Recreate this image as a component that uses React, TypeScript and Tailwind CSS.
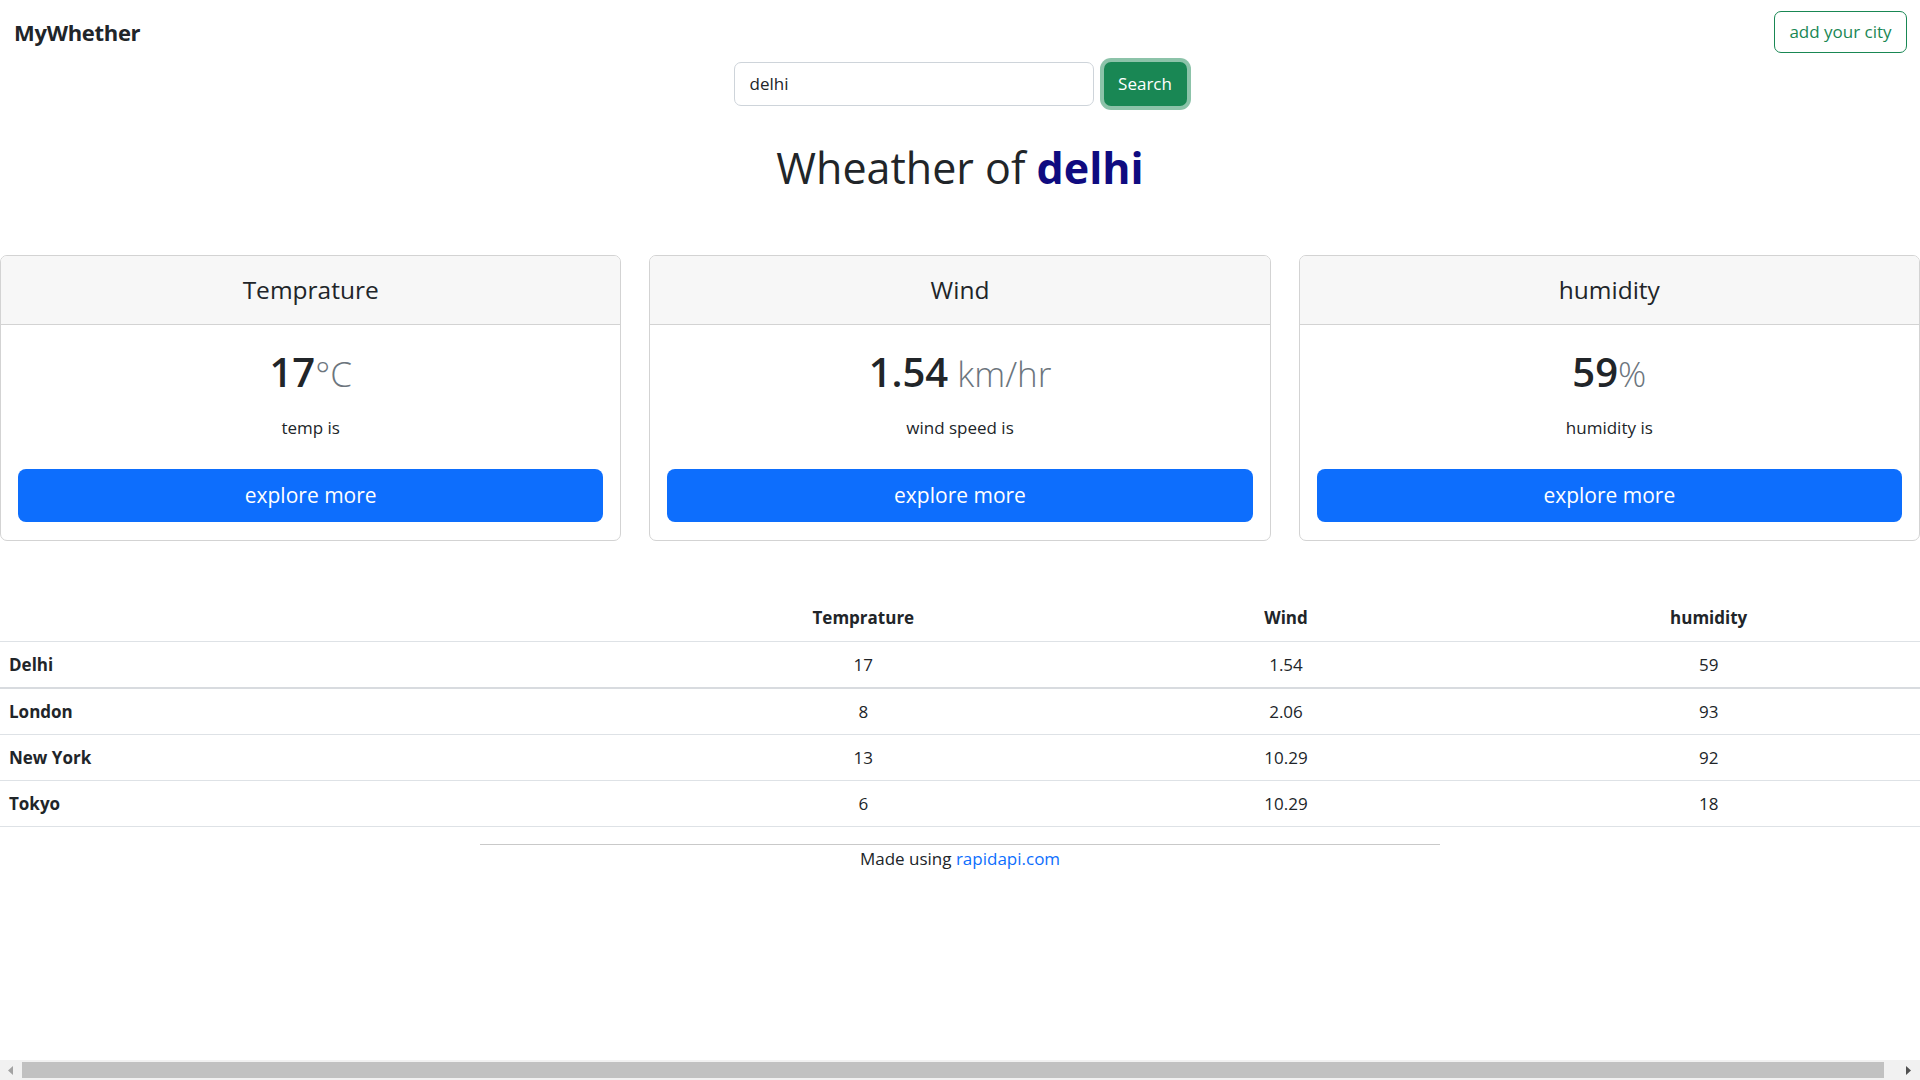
import React from "react";

const rows = [
  { city: "Delhi", t: "17", w: "1.54", h: "59" },
  { city: "London", t: "8", w: "2.06", h: "93" },
  { city: "New York", t: "13", w: "10.29", h: "92" },
  { city: "Tokyo", t: "6", w: "10.29", h: "18" },
];

const cards = [
  { title: "Temprature", value: "17", unit: "°C", label: "temp is" },
  { title: "Wind", value: "1.54", unit: " km/hr", label: "wind speed is" },
  { title: "humidity", value: "59", unit: "%", label: "humidity is" },
];

export default function App() {
  return (
    <div className="w-full h-screen flex flex-col overflow-hidden bg-white text-[#212529] font-['Open_Sans','Noto_Sans',sans-serif]">
      <div className="flex-1 flex flex-col">
        {/* Navbar */}
        <div className="flex justify-between items-start pt-[11px] pl-[14px] pr-[13px]">
          <div className="h-[42px] flex items-center text-[22px] font-bold tracking-[-0.3px]">MyWhether</div>
          <button className="h-[42px] w-[133px] border border-[#198754] text-[#198754] rounded-[7px] text-[17px] bg-white">
            add your city
          </button>
        </div>

        {/* Search */}
        <div className="mt-[9px] flex justify-center gap-[10px]">
          <div className="w-[360px] h-[44px] border border-[#ced4da] rounded-[7px] px-[15px] flex items-center text-[17px]">
            delhi
          </div>
          <button className="w-[83px] h-[44px] bg-[#198754] text-white rounded-[7px] text-[17px] shadow-[0_0_0_4px_rgba(25,135,84,0.5)]">
            Search
          </button>
        </div>

        {/* Heading */}
        <h1 className="mt-[36px] text-center text-[43px] leading-[52px] font-normal">
          Wheather of <span className="font-bold text-[#0f0b80]">delhi</span>
        </h1>

        {/* Cards */}
        <div className="mt-[61px] grid grid-cols-3 gap-[28px]">
          {cards.map((c) => (
            <div key={c.title} className="border border-[#d3d3d3] rounded-[7px] overflow-hidden flex flex-col">
              <div className="h-[69px] bg-[#f7f7f7] border-b border-[#d3d3d3] flex items-center justify-center text-[24.5px]">
                {c.title}
              </div>
              <div className="pt-[23px] px-[17px] pb-[18px] flex flex-col">
                <div className="text-center leading-[48px] h-[48px] whitespace-pre">
                  <span className="text-[40px] font-semibold">{c.value}</span>
                  <span className="text-[35px] font-light text-[#6c757d]">{c.unit}</span>
                </div>
                <div className="mt-[19px] text-center text-[17px] leading-[26px]">{c.label}</div>
                <button className="mt-[28px] h-[53px] w-full bg-[#0d6efd] text-white rounded-[8px] text-[21px]">
                  explore more
                </button>
              </div>
            </div>
          ))}
        </div>

        {/* Table */}
        <div className="mt-[54px] text-[17px]">
          <div className="grid grid-cols-[652px_1fr_1fr_1fr] h-[47px] border-b border-[#dee2e6] items-center font-bold">
            <div></div>
            <div className="text-center">Temprature</div>
            <div className="text-center">Wind</div>
            <div className="text-center">humidity</div>
          </div>
          {rows.map((r, i) => (
            <div
              key={r.city}
              className={
                i === 0
                  ? "grid grid-cols-[652px_1fr_1fr_1fr] h-[47px] border-b-2 border-[#d8dbdf] items-center"
                  : "grid grid-cols-[652px_1fr_1fr_1fr] h-[46px] border-b border-[#dee2e6] items-center"
              }
            >
              <div className="pl-[9px] font-bold">{r.city}</div>
              <div className="text-center">{r.t}</div>
              <div className="text-center">{r.w}</div>
              <div className="text-center">{r.h}</div>
            </div>
          ))}
        </div>

        {/* Footer */}
        <div className="mt-[17px] w-[960px] mx-auto border-t border-[#c9c9c9]"></div>
        <div className="text-center text-[17px] leading-[27px]">
          Made using <a className="text-[#0d6efd]">rapidapi.com</a>
        </div>
      </div>

      {/* Horizontal scrollbar */}
      <div className="h-[20px] bg-[#f1f1f1] flex items-center shrink-0">
        <div className="w-[22px] h-full flex items-center justify-center">
          <svg width="6" height="9" viewBox="0 0 6 9">
            <polygon points="5,0 0,4.5 5,9" fill="#a3a3a3" />
          </svg>
        </div>
        <div className="flex-1 h-[16px] bg-[#c1c1c1]"></div>
        <div className="w-[36px] h-full flex items-center justify-end pr-[9px]">
          <svg width="6" height="9" viewBox="0 0 6 9">
            <polygon points="1,0 6,4.5 1,9" fill="#505050" />
          </svg>
        </div>
      </div>
    </div>
  );
}
